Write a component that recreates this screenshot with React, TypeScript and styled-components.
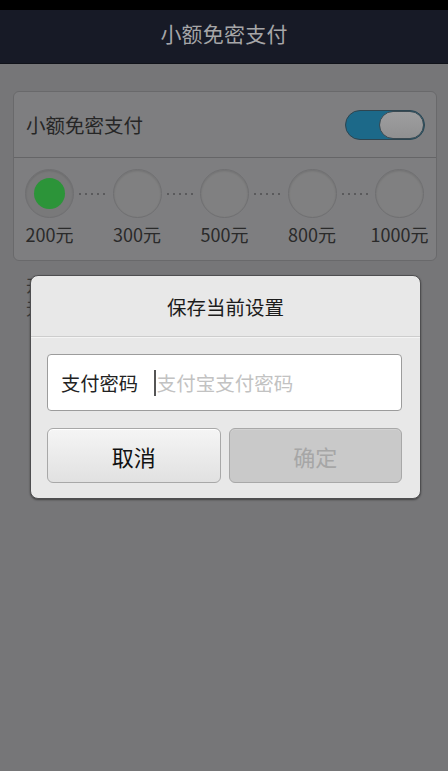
import React from 'react';
import styled, { createGlobalStyle } from 'styled-components';

const GlobalStyle = createGlobalStyle`
  html, body {
    margin: 0;
    padding: 0;
    background: #767678;
  }
  body {
    font-family: "Noto Sans CJK SC", "Noto Sans", Roboto, sans-serif;
  }
  * {
    box-sizing: border-box;
  }
`;

const Screen = styled.div`
  position: relative;
  width: 448px;
  height: 771px;
  overflow: hidden;
  background: #767678;
  display: flex;
  flex-direction: column;
`;

const StatusBar = styled.div`
  height: 10px;
  background: #000;
`;

const Header = styled.header`
  height: 54px;
  background: #171a26;
  border-bottom: 1px solid #101219;
  display: flex;
  align-items: center;
  justify-content: center;
  color: #a6a6a8;
  font-size: 21px;
  letter-spacing: 0.2px;
  padding-bottom: 7px;
`;

const Content = styled.div`
  padding: 27px 11px 0 13px;
`;

const Card = styled.section`
  background: #7e7e80;
  border: 1px solid #69696b;
  border-radius: 6px;
  overflow: hidden;
`;

const SwitchRow = styled.div`
  height: 66px;
  display: flex;
  align-items: center;
  justify-content: space-between;
  padding: 0 11px 0 12px;
  border-bottom: 1px solid #656567;
  color: #262626;
  font-size: 19.5px;
`;

const Toggle = styled.div<{ on?: boolean }>`
  position: relative;
  width: 80px;
  height: 30px;
  border-radius: 15px;
  background: ${({ on }) => (on ? '#1c6989' : '#8a8a8a')};
  border: 1px solid #2e4550;
`;

const Knob = styled.div<{ on?: boolean }>`
  position: absolute;
  top: 0;
  ${({ on }) => (on ? 'right: 0;' : 'left: 0;')}
  width: 45px;
  height: 28px;
  border-radius: 14px;
  background: linear-gradient(#9e9e9f, #909091);
  border: 1.5px solid #3b4a52;
`;

const Steps = styled.div`
  display: flex;
  align-items: flex-start;
  padding: 11px 12px 14px 11px;
`;

const Step = styled.div`
  width: 49px;
  display: flex;
  flex-direction: column;
  align-items: center;
  flex-shrink: 0;
`;

const Dot = styled.div<{ active?: boolean }>`
  width: 49px;
  height: 49px;
  border-radius: 50%;
  background: ${({ active }) => (active ? '#79797a' : '#808081')};
  border: 1px solid #6f6f71;
  box-shadow: inset 0 1px 2px rgba(0, 0, 0, 0.12);
  display: flex;
  align-items: center;
  justify-content: center;

  &::after {
    content: '';
    display: ${({ active }) => (active ? 'block' : 'none')};
    width: 31px;
    height: 31px;
    border-radius: 50%;
    background: #2c9439;
  }
`;

const StepLabel = styled.span`
  margin-top: 4px;
  white-space: nowrap;
  font-size: 18px;
  line-height: 24px;
  color: #2a2a2a;
`;

const Connector = styled.div`
  flex: 1;
  height: 2px;
  margin: 23.5px 4px 0 5px;
  background-image: linear-gradient(to right, #5a5a5c 0 2px, transparent 2px 6px);
  background-size: 6px 2px;
  background-repeat: repeat-x;
`;

const Note = styled.p`
  margin: 12px 0 0 13px;
  font-size: 17px;
  line-height: 23px;
  color: #3a3a3a;
`;

const Overlay = styled.div`
  position: absolute;
  inset: 0;
  padding: 275px 0 0 30px;
`;

const Dialog = styled.div`
  width: 391px;
  background: #e8e8e8;
  border: 1px solid #4e4e50;
  border-radius: 8px;
  box-shadow: 0 1px 2px rgba(0, 0, 0, 0.45);
  padding-bottom: 15px;
`;

const DialogTitle = styled.div`
  height: 61px;
  display: flex;
  align-items: center;
  justify-content: center;
  font-size: 19.5px;
  color: #1c1c1c;
  border-bottom: 1px solid #cdcdcd;
  box-shadow: 0 1px 0 #f4f4f4;
`;

const DialogBody = styled.div`
  padding: 17px 18px 0 16px;
  display: flex;
  flex-direction: column;
  gap: 17px;
`;

const Field = styled.label`
  height: 57px;
  background: #fff;
  border: 1.5px solid #9c9c9c;
  border-radius: 4px;
  display: flex;
  align-items: center;
  padding-left: 13px;
`;

const FieldLabel = styled.span`
  font-size: 19.3px;
  color: #222;
  margin-right: 16px;
`;

const Caret = styled.span`
  width: 1.5px;
  height: 26px;
  background: #555;
  margin-right: 1px;
`;

const Placeholder = styled.span`
  font-size: 19.5px;
  color: #c2c2c2;
`;

const Buttons = styled.div`
  display: flex;
  gap: 8px;
`;

const Button = styled.button<{ disabled?: boolean }>`
  flex: 1;
  height: 55px;
  border-radius: 6px;
  border: 1px solid #a8a8a8;
  font-family: inherit;
  font-size: 22px;
  padding: 0;
  color: ${({ disabled }) => (disabled ? '#a6a6a6' : '#111')};
  background: ${({ disabled }) =>
    disabled ? '#c9c9c9' : 'linear-gradient(#f5f5f5, #e1e1e1)'};
  box-shadow: ${({ disabled }) =>
    disabled ? 'inset 0 1px 0 #d2d2d2' : 'inset 0 1px 0 #ffffff'};
`;

const amounts = [200, 300, 500, 800, 1000];

const App: React.FC = () => {
  return (
    <>
      <GlobalStyle />
      <Screen>
        <StatusBar />
        <Header>小额免密支付</Header>
        <Content>
          <Card>
            <SwitchRow>
              小额免密支付
              <Toggle on>
                <Knob on />
              </Toggle>
            </SwitchRow>
            <Steps>
              {amounts.map((amount, index) => (
                <React.Fragment key={amount}>
                  {index > 0 && <Connector />}
                  <Step>
                    <Dot active={index === 0} />
                    <StepLabel>{amount}元</StepLabel>
                  </Step>
                </React.Fragment>
              ))}
            </Steps>
          </Card>
          <Note>
            开启后，单笔支付金额小于所选额度时，
            <br />
            无需输入支付密码
          </Note>
        </Content>
        <Overlay>
          <Dialog>
            <DialogTitle>保存当前设置</DialogTitle>
            <DialogBody>
              <Field>
                <FieldLabel>支付密码</FieldLabel>
                <Caret />
                <Placeholder>支付宝支付密码</Placeholder>
              </Field>
              <Buttons>
                <Button>取消</Button>
                <Button disabled>确定</Button>
              </Buttons>
            </DialogBody>
          </Dialog>
        </Overlay>
      </Screen>
    </>
  );
};

export default App;
